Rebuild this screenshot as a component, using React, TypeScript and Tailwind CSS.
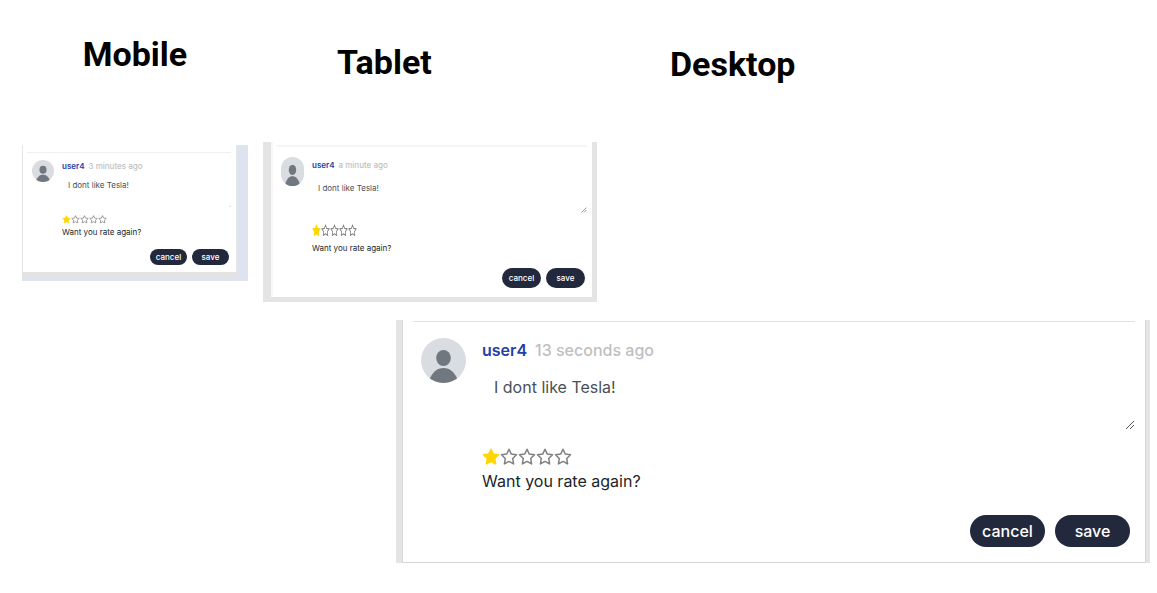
import React from "react";

type Variant = {
  id: string;
  frame: string;
  panel: string;
  rule: string;
  body: string;
  avatar: string;
  content: string;
  header: string;
  textarea: string;
  grip: string;
  stars: string;
  star: string;
  prompt: string;
  actions: string;
  button: string;
};

const mobile: Variant = {
  id: "mobile",
  frame: "mt-[3px] bg-[#dde4f0] pr-[10px] pb-1",
  panel: "border-l border-r-2 border-b-[5px] border-l-[#e5e5e5] border-r-[#e5e5e5] border-b-[#e3e3e3] pt-[7px] pb-[7px] pl-1 pr-[5px]",
  rule: "border-[#f0f0f0]",
  body: "gap-2 pt-[7px] pl-[5px]",
  avatar: "h-[22px] w-[22px]",
  content: "text-[8px] leading-3",
  header: "gap-1",
  textarea: "mt-[5px] h-[30px] px-[6px] py-[2px]",
  grip: "bottom-0 right-0 h-[2px] w-[2px]",
  stars: "mt-[7px] h-[10px]",
  star: "h-[9px] w-[9px]",
  prompt: "mt-[2px]",
  actions: "mt-[11px] gap-[5px] pr-[2px]",
  button: "h-4 w-[37px]",
};

const tablet: Variant = {
  id: "tablet",
  frame: "bg-[#e4e4e4] pl-2 pr-[5px] pb-[5px]",
  panel: "border-l-2 border-l-[#f7f7f7] pt-[3px] pb-[9px] pl-[3px] pr-[5px]",
  rule: "border-t-2 border-[#f5f5f5]",
  body: "gap-2 pt-[10px] pl-[5px]",
  avatar: "h-[29px] w-[23px]",
  content: "text-[8px] leading-4",
  header: "gap-1",
  textarea: "mt-[7px] h-[33px] px-[6px] py-0",
  grip: "bottom-0 right-0 h-[6px] w-[6px]",
  stars: "mt-[10px] h-[14px]",
  star: "h-[13px] w-[9px]",
  prompt: "mt-[3px]",
  actions: "mt-3 gap-[5px] pr-[2px]",
  button: "h-5 w-[39px]",
};

const desktop: Variant = {
  id: "desktop",
  frame: "bg-[#e4e4e4] pl-[6px] pr-1",
  panel: "border-x border-b border-[#d6d6d6] pt-px pb-[15px] px-[10px]",
  rule: "border-[#e2e2e2]",
  body: "gap-4 pt-4 pl-2",
  avatar: "h-[45px] w-[45px]",
  content: "text-base leading-6",
  header: "gap-2",
  textarea: "mt-[7px] h-[61px] px-3 py-[6px]",
  grip: "bottom-0 right-0 h-[10px] w-[10px]",
  stars: "mt-4 h-[22px]",
  star: "h-[18px] w-[18px]",
  prompt: "mt-[1px]",
  actions: "mt-[22px] gap-[10px] pr-[5px]",
  button: "h-8 w-[75px]",
};

function Avatar({ className }: { className: string }) {
  return (
    <svg viewBox="0 0 45 45" preserveAspectRatio="none" className={`shrink-0 rounded-full ${className}`} aria-hidden="true">
      <rect width="45" height="45" fill="#d9dce1" />
      <ellipse cx="22.5" cy="20" rx="7.3" ry="8" fill="#71777f" />
      <path d="M8 43C11 34 16 30 22.5 30S34 34 37 43V45H8Z" fill="#71777f" />
    </svg>
  );
}

function Star({ filled, className }: { filled: boolean; className: string }) {
  return (
    <svg viewBox="0 0 18 18" preserveAspectRatio="none" className={className} aria-hidden="true">
      <path
        d="M9 1.3 11.3 6.1 16.5 6.8 12.7 10.5 13.6 15.9 9 13.4 4.4 15.9 5.3 10.5 1.5 6.8 6.7 6.1Z"
        fill={filled ? "#ffd700" : "none"}
        stroke={filled ? "#ffd700" : "#808080"}
        strokeWidth="1.5"
        strokeLinejoin="round"
      />
    </svg>
  );
}

function CommentEditor({ v, time }: { v: Variant; time: string }) {
  return (
    <div className={v.frame}>
      <form className={`bg-white ${v.panel}`} onSubmit={(e) => e.preventDefault()}>
        <hr className={v.rule} />
        <div className={`flex items-start ${v.body}`}>
          <Avatar className={v.avatar} />
          <div className={`min-w-0 flex-1 ${v.content}`}>
            <div className={`flex whitespace-nowrap ${v.header}`}>
              <a href="#user4" className="font-semibold text-[#2440a8]">user4</a>
              <time className="font-medium text-[#bdbfc2]">{time}</time>
            </div>
            <div className="relative">
              <textarea
                id={`${v.id}-comment`}
                aria-label="Comment"
                defaultValue="I dont like Tesla!"
                className={`block w-full resize-none overflow-hidden bg-transparent text-[#495057] outline-none ${v.textarea}`}
              />
              <svg viewBox="0 0 10 10" className={`pointer-events-none absolute ${v.grip}`} aria-hidden="true">
                <path d="M1 9 9 1M5 9 9 5" stroke="#555" fill="none" />
              </svg>
            </div>
            <div className={`flex items-center ${v.stars}`} role="img" aria-label="1 of 5 stars">
              {[0, 1, 2, 3, 4].map((i) => (
                <Star key={i} filled={i === 0} className={v.star} />
              ))}
            </div>
            <p className={`text-[#212529] ${v.prompt}`}>Want you rate again?</p>
            <div className={`flex justify-end font-medium text-white ${v.actions}`}>
              <button type="button" className={`flex items-center justify-center rounded-full bg-[#23293d] ${v.button}`}>cancel</button>
              <button type="submit" className={`flex items-center justify-center rounded-full bg-[#23293d] ${v.button}`}>save</button>
            </div>
          </div>
        </div>
      </form>
    </div>
  );
}

export default function App() {
  return (
    <main className="min-h-screen bg-white pl-[22px] pr-[7px] pt-8 pb-[30px] font-['Inter','Liberation_Sans',sans-serif]">
      <div className="grid grid-cols-[226fr_334fr_538fr] gap-x-[15px] font-['Roboto','Liberation_Sans',sans-serif] text-[34px] leading-[44px] font-bold text-black">
        <h1 className="text-center">Mobile</h1>
        <h1 className="pt-2 pl-[74px]">Tablet</h1>
        <h1 className="pt-[10px] pl-[58px]">Desktop</h1>
      </div>
      <div className="mt-14 grid grid-cols-[226fr_334fr_538fr] items-start gap-x-[15px]">
        <CommentEditor v={mobile} time="3 minutes ago" />
        <CommentEditor v={tablet} time="a minute ago" />
      </div>
      <div className="mt-[18px] ml-[374px]">
        <CommentEditor v={desktop} time="13 seconds ago" />
      </div>
    </main>
  );
}
